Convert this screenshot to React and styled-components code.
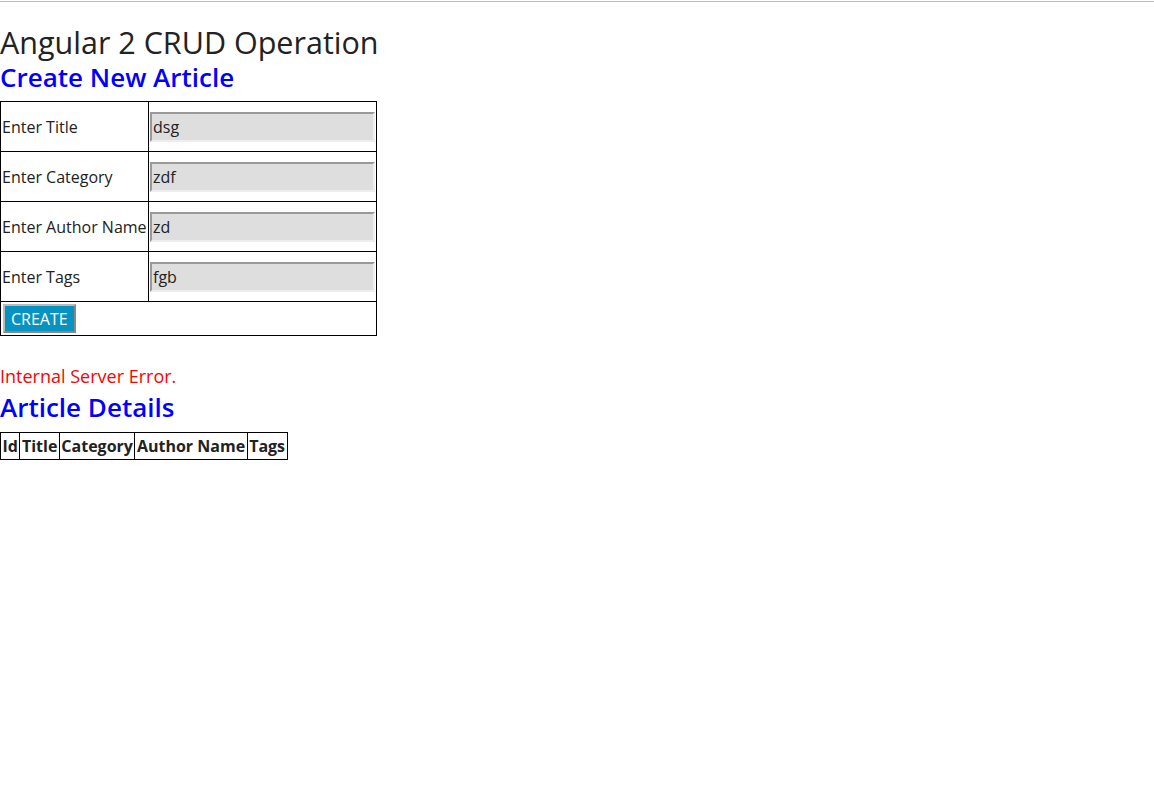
import React from 'react';
import styled, { createGlobalStyle } from 'styled-components';

const GlobalStyle = createGlobalStyle`
  body {
    margin: 0;
    background: #fff;
    font-family: "Open Sans", "Noto Sans", sans-serif;
    color: #222;
  }
`;

const Rule = styled.div`
  height: 1px;
  margin-top: 1px;
  background: #bbb;
`;

const Page = styled.main`
  padding-top: 23px;
`;

const Title = styled.h1`
  margin: 0;
  font-size: 30.5px;
  font-weight: 400;
  line-height: 34px;
  color: #222;
`;

const Heading = styled.h2`
  margin: 4px 0 0;
  font-size: 26px;
  font-weight: 600;
  line-height: 28px;
  color: #0000ff;
`;

const FormTable = styled.table`
  border-collapse: collapse;
  width: 377px;
  margin-top: 10px;
  font-size: 16px;

  td {
    border: 1px solid #000;
    padding: 0 1px;
    height: 49px;
  }

  td:first-child {
    width: 146px;
    white-space: nowrap;
  }
`;

const ButtonRow = styled.tr`
  td {
    height: 31px;
    padding: 1px 2px;
  }
`;

const Field = styled.input`
  box-sizing: border-box;
  width: 225px;
  height: 30px;
  margin-top: 1px;
  padding: 0 1px;
  background: #dedede;
  border: 2px solid;
  border-color: #999 #eee #eee #999;
  font-family: inherit;
  font-size: 16px;
  color: #222;
  outline: none;
`;

const CreateButton = styled.button`
  height: 29px;
  padding: 0 6px;
  background: #0793c1;
  color: #fff;
  border: 2px solid;
  border-color: #bbb #888 #888 #bbb;
  font-family: inherit;
  font-size: 16px;
  cursor: pointer;
`;

const ErrorText = styled.p`
  margin: 27px 0 1px;
  font-size: 18px;
  line-height: 26px;
  color: #ff0000;
`;

const DetailsTable = styled.table`
  border-collapse: collapse;
  margin-top: 11px;
  font-size: 16px;

  th {
    border: 1px solid #000;
    padding: 0 1.5px;
    height: 26px;
    font-weight: 700;
  }
`;

const fields = [
  { label: 'Enter Title', value: 'dsg' },
  { label: 'Enter Category', value: 'zdf' },
  { label: 'Enter Author Name', value: 'zd' },
  { label: 'Enter Tags', value: 'fgb' },
];

export default function App() {
  return (
    <>
      <GlobalStyle />
      <Rule />
      <Page>
        <Title>Angular 2 CRUD Operation</Title>
        <Heading>Create New Article</Heading>
        <FormTable>
          <tbody>
            {fields.map(f => (
              <tr key={f.label}>
                <td>{f.label}</td>
                <td><Field defaultValue={f.value} /></td>
              </tr>
            ))}
            <ButtonRow>
              <td colSpan={2}><CreateButton>CREATE</CreateButton></td>
            </ButtonRow>
          </tbody>
        </FormTable>
        <ErrorText>Internal Server Error.</ErrorText>
        <Heading>Article Details</Heading>
        <DetailsTable>
          <thead>
            <tr>
              <th>Id</th>
              <th>Title</th>
              <th>Category</th>
              <th>Author Name</th>
              <th>Tags</th>
            </tr>
          </thead>
        </DetailsTable>
      </Page>
    </>
  );
}
